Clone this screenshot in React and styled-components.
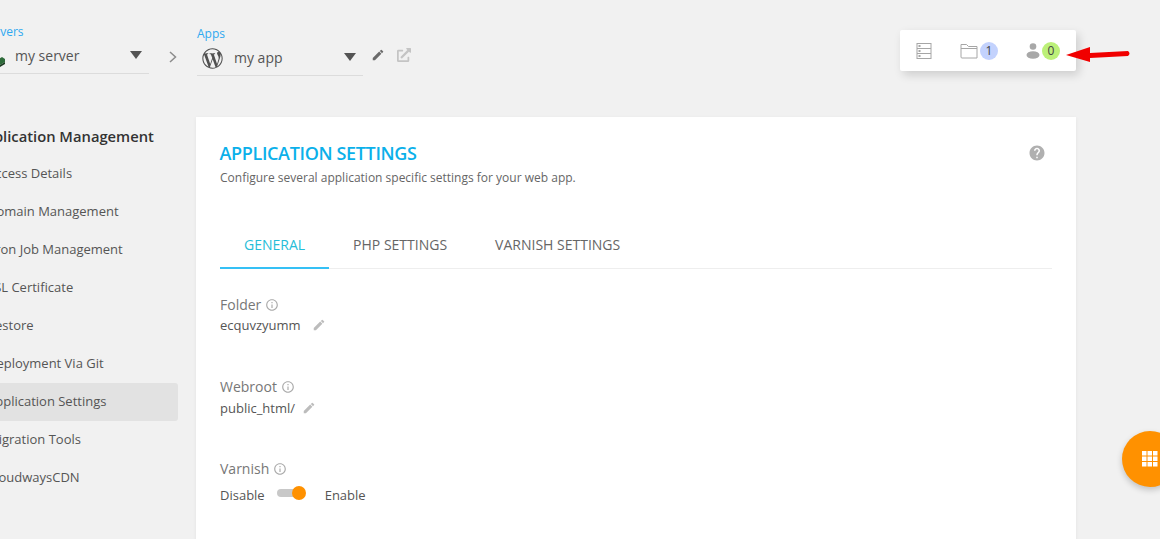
import styled, { createGlobalStyle } from 'styled-components';
import { FaWordpressSimple, FaExternalLinkAlt } from 'react-icons/fa';
import { MdEdit, MdHelp, MdInfoOutline } from 'react-icons/md';

const sideItems = [
    { label: 'Access Details' },
    { label: 'Domain Management' },
    { label: 'Cron Job Management' },
    { label: 'SSL Certificate' },
    { label: 'Restore' },
    { label: 'Deployment Via Git' },
    { label: 'Application Settings', active: true },
    { label: 'Migration Tools' },
    { label: 'CloudwaysCDN' },
];

export default function App() {
    return (
        <Page>
            <GlobalStyle />
            <Header>
                <Selectors>
                    <Selector $width={167} $shift={-18}>
                        <SelectLabel>Servers</SelectLabel>
                        <SelectBox>
                            <ServerIcon width="23" height="20" viewBox="0 0 23 20">
                                <path d="M15 13 L20 10 L23 12 L23 15 L18 18 L15 16 Z" fill="#2e6b3a" />
                                <path d="M15 16 L18 18 L23 15 L23 17 L18 20 L15 18 Z" fill="#1c3a22" />
                            </ServerIcon>
                            <SelectText $gap={10}>my server</SelectText>
                            <Caret />
                        </SelectBox>
                    </Selector>
                    <Chevron width="10" height="14" viewBox="0 0 10 14">
                        <path d="M2 2 L7.5 7 L2 12" fill="none" stroke="#8c8c8c" strokeWidth="1.5" />
                    </Chevron>
                    <Selector $width={166}>
                        <SelectLabel>Apps</SelectLabel>
                        <SelectBox $inset={5}>
                            <FaWordpressSimple size={21} color="#505050" />
                            <SelectText $gap={11}>my app</SelectText>
                            <Caret />
                        </SelectBox>
                    </Selector>
                    <AppActions>
                        <MdEdit size={14} color="#6a6a6a" />
                        <FaExternalLinkAlt size={14} color="#c4c4c4" />
                    </AppActions>
                </Selectors>
                <StatusBox>
                    <StatusGroup>
                        <svg width="16" height="16" viewBox="0 0 16 16">
                            <rect x="1" y="0.5" width="14" height="15" fill="none" stroke="#a6a6a6" />
                            <path d="M1 5.5 H15 M1 10.5 H15" stroke="#a6a6a6" />
                            <path d="M3.5 2 V4 M3.5 7 V9 M3.5 12 V14" stroke="#a6a6a6" strokeWidth="2" />
                        </svg>
                    </StatusGroup>
                    <StatusGroup>
                        <svg width="18" height="16" viewBox="0 0 18 16">
                            <path d="M1 14 V1.5 H6.5 L8.5 3.5 H17 V15 H2 Q1 15 1 14 Z M1 5.5 H17" fill="none" stroke="#a6a6a6" />
                        </svg>
                        <Badge $color="#c3d2fd">1</Badge>
                    </StatusGroup>
                    <StatusGroup>
                        <svg width="14" height="16" viewBox="0 0 14 16">
                            <circle cx="7" cy="3.5" r="3.3" fill="#a8a8a8" />
                            <ellipse cx="7" cy="12" rx="6.5" ry="3.8" fill="#a8a8a8" />
                        </svg>
                        <Badge $color="#bcf078">0</Badge>
                    </StatusGroup>
                </StatusBox>
            </Header>

            <Body>
                <Sidebar>
                    <SideTitle>Application Management</SideTitle>
                    {sideItems.map((item) => (
                        <SideItem key={item.label} $active={item.active}>
                            {item.label}
                        </SideItem>
                    ))}
                </Sidebar>

                <Card>
                    <CardHead>
                        <div>
                            <CardTitle>APPLICATION SETTINGS</CardTitle>
                            <CardSub>Configure several application specific settings for your web app.</CardSub>
                        </div>
                        <HelpIcon size={18} color="#b0b0b0" />
                    </CardHead>
                    <Tabs>
                        <Tab $active>GENERAL</Tab>
                        <Tab>PHP SETTINGS</Tab>
                        <Tab>VARNISH SETTINGS</Tab>
                    </Tabs>

                    <Field $height={82}>
                        <FieldLabel>Folder <MdInfoOutline size={14} color="#aaa" /></FieldLabel>
                        <FieldValue $gap={11}>ecquvzyumm <MdEdit size={14} color="#bcbcbc" /></FieldValue>
                    </Field>
                    <Field $height={82}>
                        <FieldLabel>Webroot <MdInfoOutline size={14} color="#aaa" /></FieldLabel>
                        <FieldValue $gap={7} $top={1}>public_html/ <MdEdit size={14} color="#bcbcbc" /></FieldValue>
                    </Field>
                    <Field>
                        <FieldLabel>Varnish <MdInfoOutline size={14} color="#aaa" /></FieldLabel>
                        <SwitchRow>
                            Disable
                            <SwitchTrack><SwitchKnob /></SwitchTrack>
                            Enable
                        </SwitchRow>
                    </Field>
                </Card>
            </Body>

            <Arrow width="66" height="20" viewBox="0 0 66 20">
                <path d="M0 11 L24 3 L24 9 L62 7 Q65 9.5 62 12 L24 14 L24 18 Z" fill="#f10000" />
            </Arrow>

            <Fab>
                <svg width="16" height="16" viewBox="0 0 16 16" fill="#fff">
                    {[0, 5.5, 11].map((y) => [0, 5.5, 11].map((x) => (
                        <rect key={`${x}-${y}`} x={x} y={y} width="4.5" height="4.5" />
                    )))}
                </svg>
            </Fab>
        </Page>
    );
}

const GlobalStyle = createGlobalStyle`
    html, body {
        margin: 0;
        padding: 0;
        overflow: hidden;
    }
    body {
        font-family: 'Open Sans', sans-serif;
    }
`;

const Page = styled.div`
    position: relative;
    width: 1160px;
    height: 539px;
    overflow: hidden;
    box-sizing: border-box;
    background-color: #f1f1f1;
    padding-top: 24px;
`;

const Header = styled.div`
    display: flex;
    justify-content: space-between;
    align-items: flex-start;
    height: 93px;
    padding-right: 84px;
`;

const Selectors = styled.div`
    display: flex;
    align-items: flex-start;
`;

const Selector = styled.div`
    width: ${(p) => p.$width}px;
    margin-left: ${(p) => p.$shift || 0}px;
    margin-top: ${(p) => (p.$shift ? 0 : 2)}px;
`;

const SelectLabel = styled.div`
    font-size: 12px;
    line-height: 16px;
    color: #2fa9f0;
`;

const SelectBox = styled.div`
    display: flex;
    align-items: center;
    height: 33px;
    padding-left: ${(p) => p.$inset || 0}px;
    border-bottom: 1px solid #dcdcdc;
`;

const ServerIcon = styled.svg`
    flex-shrink: 0;
`;

const SelectText = styled.span`
    flex: 1;
    font-size: 14px;
    color: #555;
    margin-left: ${(p) => p.$gap}px;
    margin-bottom: 3px;
`;

const Caret = styled.span`
    width: 0;
    height: 0;
    margin-right: 7px;
    margin-top: -4px;
    border-left: 6.5px solid transparent;
    border-right: 6.5px solid transparent;
    border-top: 8px solid #545454;
`;

const Chevron = styled.svg`
    margin: 26px 19px 0 19px;
`;

const AppActions = styled.div`
    display: flex;
    align-items: center;
    gap: 12px;
    margin: 24px 0 0 8px;
`;

const StatusBox = styled.div`
    display: flex;
    align-items: center;
    justify-content: space-between;
    box-sizing: border-box;
    width: 176px;
    height: 41px;
    margin-top: 6px;
    padding: 0 16px;
    background-color: #fff;
    border-radius: 2px;
    box-shadow: 3px 4px 10px rgba(0, 0, 0, 0.15);
`;

const StatusGroup = styled.div`
    display: flex;
    align-items: center;
    gap: 2px;
`;

const Badge = styled.span`
    display: flex;
    align-items: center;
    justify-content: center;
    width: 18px;
    height: 18px;
    border-radius: 50%;
    font-size: 12px;
    color: #444;
    background-color: ${(p) => p.$color};
`;

const Body = styled.div`
    display: flex;
    align-items: flex-start;
`;

const Sidebar = styled.div`
    width: 196px;
    flex-shrink: 0;
`;

const SideTitle = styled.div`
    margin: 9px 0 9px -25px;
    font-size: 14.75px;
    line-height: 20px;
    font-weight: 600;
    color: #333;
    white-space: nowrap;
`;

const SideItem = styled.div`
    width: 191px;
    height: 38px;
    margin-left: -13px;
    padding-bottom: 2px;
    display: flex;
    align-items: center;
    box-sizing: border-box;
    font-size: 13px;
    color: #555;
    white-space: nowrap;
    border-radius: 0 3px 3px 0;
    background-color: ${(p) => (p.$active ? '#e2e2e2' : 'transparent')};
`;

const Card = styled.div`
    width: 880px;
    height: 500px;
    box-sizing: border-box;
    padding: 24px 24px 0;
    background-color: #fff;
    box-shadow: 0 1px 4px rgba(0, 0, 0, 0.06);
`;

const CardHead = styled.div`
    display: flex;
    justify-content: space-between;
    align-items: flex-start;
    padding-right: 6px;
`;

const HelpIcon = styled(MdHelp)`
    margin-top: 3px;
`;

const CardTitle = styled.div`
    font-size: 18px;
    line-height: 24px;
    font-weight: 600;
    letter-spacing: -0.35px;
    margin-left: -0.5px;
    color: #0bb0ea;
`;

const CardSub = styled.div`
    margin-top: 4px;
    font-size: 12px;
    line-height: 18px;
    color: #666;
`;

const Tabs = styled.div`
    display: flex;
    margin-top: 34px;
    border-bottom: 1px solid #eee;
`;

const Tab = styled.div`
    padding: 0 24px;
    height: 48px;
    display: flex;
    align-items: center;
    box-sizing: border-box;
    font-size: 14px;
    color: ${(p) => (p.$active ? '#26bdd8' : '#666')};
    border-bottom: 2px solid ${(p) => (p.$active ? '#35c0f5' : 'transparent')};
    margin-bottom: -1px;
`;

const Field = styled.div`
    height: ${(p) => p.$height || 60}px;
`;

const FieldLabel = styled.div`
    display: flex;
    align-items: center;
    gap: 4px;
    padding-top: 26px;
    font-size: 14px;
    line-height: 20px;
    color: #777;
`;

const FieldValue = styled.div`
    display: flex;
    align-items: center;
    gap: ${(p) => p.$gap}px;
    margin-top: ${(p) => p.$top || 0}px;
    font-size: 13px;
    line-height: 20px;
    color: #555;
`;

const SwitchRow = styled.div`
    display: flex;
    align-items: center;
    gap: 12px;
    margin-top: 6px;
    font-size: 13px;
    line-height: 20px;
    color: #555;
`;

const SwitchTrack = styled.div`
    position: relative;
    width: 28px;
    height: 8px;
    margin: -4px 8px 0 0;
    border-radius: 4px;
    background-color: #c8c8c8;
`;

const SwitchKnob = styled.span`
    position: absolute;
    right: -1px;
    top: -3px;
    width: 14px;
    height: 14px;
    border-radius: 50%;
    background-color: #ff9100;
`;

const Arrow = styled.svg`
    position: absolute;
    left: 1066px;
    top: 44px;
`;

const Fab = styled.div`
    position: absolute;
    left: 1122px;
    top: 431px;
    width: 56px;
    height: 56px;
    box-sizing: border-box;
    display: flex;
    align-items: center;
    padding-left: 20px;
    border-radius: 50%;
    background-color: #ff9100;
    box-shadow: 0 3px 6px rgba(0, 0, 0, 0.2);
`;
